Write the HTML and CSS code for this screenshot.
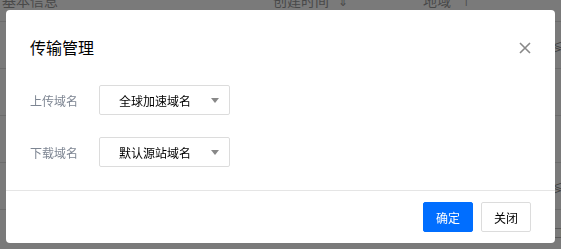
FILE: index.html
```html
<!DOCTYPE html>
<html>
<head>
    <meta charset="UTF-8">
    <title>传输管理</title>
    <link rel="stylesheet" href="styles.css">
</head>
<body>
    <!-- 底层列表页 -->
    <div class="page">
        <div class="table-head">
            <span class="col col-name">基本信息</span>
            <span class="col col-time">创建时间 <span class="sort">⇕</span></span>
            <span class="col col-region">地域 <span class="sort">↑</span></span>
        </div>
        <div class="table-row"><span class="row-tail">≶</span></div>
        <div class="table-row"></div>
        <div class="table-row"></div>
        <div class="table-row"><span class="row-tail">≶</span></div>
        <div class="table-row"><span class="row-tail box">□</span></div>
    </div>

    <!-- 遮罩和弹窗 -->
    <div class="mask"></div>
    <div class="dialog">
        <div class="dialog-header">
            <h3 class="dialog-title">传输管理</h3>
            <span class="dialog-close">
                <svg width="12" height="12" viewBox="0 0 12 12">
                    <path d="M1 1 L11 11 M11 1 L1 11" stroke="#888" stroke-width="1.6" fill="none"/>
                </svg>
            </span>
        </div>
        <div class="dialog-body">
            <div class="form-item">
                <span class="form-label">上传域名</span>
                <div class="select">
                    <span class="select-text">全球加速域名</span>
                    <span class="select-arrow"></span>
                </div>
            </div>
            <div class="form-item">
                <span class="form-label">下载域名</span>
                <div class="select">
                    <span class="select-text">默认源站域名</span>
                    <span class="select-arrow"></span>
                </div>
            </div>
        </div>
        <div class="dialog-footer">
            <a class="btn btn-primary">确定</a>
            <a class="btn">关闭</a>
        </div>
    </div>
</body>
</html>
```

FILE: styles.css
```css
body {
    margin: 0;
    font-family: "Noto Sans CJK SC", "Liberation Sans", sans-serif;
    background-color: #fff;
    overflow: hidden;
}

.page {
    width: 561px;
    height: 249px;
}

.table-head {
    height: 21px;
    border-bottom: 1px solid #e2e2e2;
    position: relative;
    margin-top: -10px;
    height: 31px;
    font-size: 14px;
    color: #999;
}

.col {
    position: absolute;
    top: 0;
    line-height: 20px;
}

.col-name {
    left: 2px;
}

.col-time {
    left: 273px;
}

.col-region {
    left: 423px;
}

.sort {
    margin-left: 6px;
    font-size: 12px;
}

.table-row {
    height: 46px;
    border-bottom: 1px solid #e2e2e2;
    position: relative;
}

.row-tail {
    position: absolute;
    right: -2px;
    top: 16px;
    font-size: 12px;
    color: #888;
}

.row-tail.box {
    top: 14px;
}

.mask {
    position: fixed;
    left: 0;
    top: 0;
    right: 0;
    bottom: 0;
    background-color: rgba(0, 0, 0, 0.52);
}

.dialog {
    position: fixed;
    left: 6px;
    top: 10px;
    width: 549px;
    height: 233px;
    background-color: #fff;
    border-radius: 4px;
    display: flex;
    flex-direction: column;
}

.dialog-header {
    display: flex;
    justify-content: space-between;
    align-items: center;
    padding: 25px 24px 0 24px;
    height: 24px;
}

.dialog-title {
    margin: 0;
    font-size: 16px;
    font-weight: normal;
    color: #000;
    line-height: 24px;
}

.dialog-close {
    display: flex;
    width: 12px;
    height: 12px;
    cursor: pointer;
    margin-top: 2px;
}

.dialog-body {
    flex: 1;
    padding: 26px 24px 0 24px;
    display: flex;
    flex-direction: column;
    gap: 22px;
}

.form-item {
    display: flex;
    align-items: center;
}

.form-label {
    width: 69px;
    font-size: 12px;
    color: #7d8592;
}

.select {
    width: 127px;
    height: 28px;
    border: 1px solid #dcdcdc;
    border-radius: 2px;
    display: flex;
    align-items: center;
    justify-content: space-between;
    padding: 0 10px 0 19px;
    box-sizing: content-box;
    width: 100px;
}

.select-text {
    font-size: 12px;
    color: #000;
}

.select-arrow {
    width: 0;
    height: 0;
    border-left: 4px solid transparent;
    border-right: 4px solid transparent;
    border-top: 5px solid #888;
}

.dialog-footer {
    border-top: 1px solid #e5e5e5;
    display: flex;
    justify-content: flex-end;
    gap: 8px;
    padding: 11px 24px 11px 24px;
}

.btn {
    display: flex;
    align-items: center;
    justify-content: center;
    width: 48px;
    height: 28px;
    border: 1px solid #dcdcdc;
    border-radius: 2px;
    font-size: 12px;
    color: #000;
    background-color: #fff;
    cursor: pointer;
}

.btn-primary {
    background-color: #006eff;
    border-color: #006eff;
    color: #fff;
}
```
